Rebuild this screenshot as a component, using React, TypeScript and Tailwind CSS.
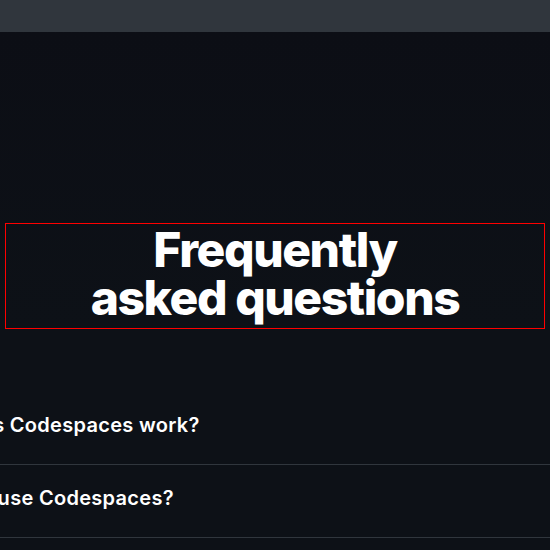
export default function App() {
  const faqs = ["How does Codespaces work?", "How do I use Codespaces?", "Is Codespaces available for individual developers?"]

  return (
    <div className="min-h-[550px] w-[550px] overflow-hidden bg-[#0d1117] text-white" style={{ fontFamily: "Inter, 'Noto Sans', sans-serif" }}>
      <div className="h-8 bg-[#30363d]" />
      <div className="bg-gradient-to-b from-[#0c0e15] to-[#0d1117] pt-[191px]">
        <div className="mx-[5px] border border-[#ff0000] pb-[6px] pt-[2px] text-center">
          <h2 className="text-[48px] font-extrabold leading-[48px] tracking-[-0.03em]">
            Frequently
            <br />
            asked questions
          </h2>
        </div>
      </div>
      <div className="mt-[63px] ml-[-94px]">
        {faqs.map((q) => (
          <div key={q} className="flex h-[73px] items-center border-b border-[#30363d] pb-[6px]">
            <span className="whitespace-nowrap text-[20px] font-semibold tracking-[0.015em]">{q}</span>
          </div>
        ))}
      </div>
    </div>
  )
}
